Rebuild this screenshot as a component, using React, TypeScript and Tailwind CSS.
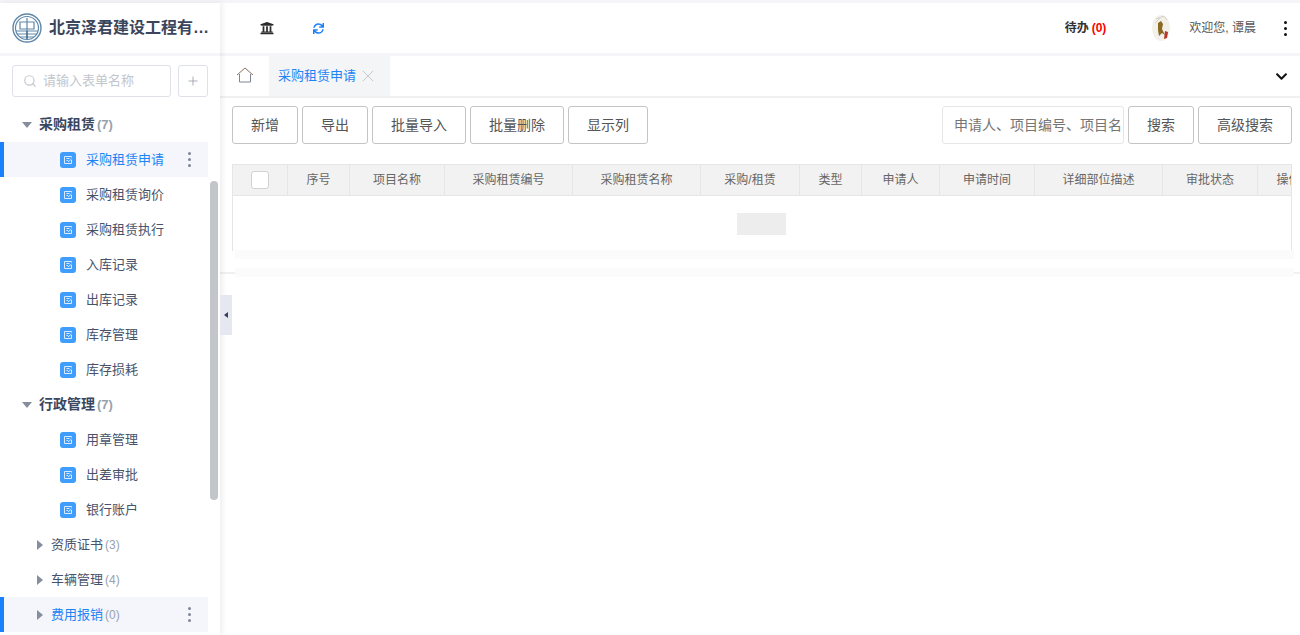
import { Plus, Search, X } from "lucide-react";
import { FaChevronDown, FaSync, FaUniversity } from "react-icons/fa";

const FONT = "font-['Liberation_Sans','Noto_Sans_CJK_SC',sans-serif]";

const columns = [
  { label: "序号", w: "w-[62px]" },
  { label: "项目名称", w: "w-[95px]" },
  { label: "采购租赁编号", w: "w-[128px]" },
  { label: "采购租赁名称", w: "w-[128px]" },
  { label: "采购/租赁", w: "w-[99px]" },
  { label: "类型", w: "w-[62px]" },
  { label: "申请人", w: "w-[78px]" },
  { label: "申请时间", w: "w-[95px]" },
  { label: "详细部位描述", w: "w-[128px]" },
  { label: "审批状态", w: "w-[95px]" },
  { label: "操作", w: "w-[62px]" },
];

function Dots({ className }: { className: string }) {
  return (
    <span className={`flex flex-col items-center gap-[3px] ${className}`}>
      <i className="w-[3px] h-[3px] rounded-full bg-current" />
      <i className="w-[3px] h-[3px] rounded-full bg-current" />
      <i className="w-[3px] h-[3px] rounded-full bg-current" />
    </span>
  );
}

function Logo() {
  return (
    <svg width="30" height="30" viewBox="0 0 30 30" fill="none" stroke="#5f87a8" className="shrink-0">
      <circle cx="15" cy="15" r="14" strokeWidth="1.4" />
      <circle cx="15" cy="15" r="11.5" strokeWidth="1.2" />
      <path d="M8 9h14v7H8zM15 5v13M4 18h22M5 21h20M8 24h14" strokeWidth="1.2" />
      <path d="M15 18v8" strokeWidth="1.6" stroke="#3f6a8e" />
    </svg>
  );
}

function FormIcon() {
  return (
    <span className="w-4 h-4 rounded-[3px] bg-[#3f9dfd] flex items-center justify-center shrink-0">
      <svg width="10" height="10" viewBox="0 0 10 10" fill="none" stroke="#d8ebff" strokeWidth="1">
        <path d="M8.5 5v3.5h-7v-7h7v1" />
        <path d="M3.5 3.5h3M3.5 5.5h1.5M5 7l3.5-3" />
      </svg>
    </span>
  );
}

function Caret({ open }: { open?: boolean }) {
  return open ? (
    <i className="w-0 h-0 border-x-[5px] border-x-transparent border-t-[6px] border-t-[#868e9e]" />
  ) : (
    <i className="w-0 h-0 border-y-[5px] border-y-transparent border-l-[6px] border-l-[#868e9e]" />
  );
}

function Group({ label, count }: { label: string; count: number }) {
  return (
    <div className="h-[35px] pl-[22px] flex items-center">
      <Caret open />
      <span className="ml-[7px] text-[14px] font-bold text-[#3a4660]">{label}</span>
      <span className="ml-[2px] text-[13px] font-bold text-[#99a1ae]">({count})</span>
    </div>
  );
}

function Item({ label, active }: { label: string; active?: boolean }) {
  return (
    <div
      className={`h-[35px] w-[208px] flex items-center ${
        active ? "bg-[#f4f6fb] border-l-4 border-[#1a7ffb] pl-[56px]" : "pl-[60px]"
      }`}
    >
      <FormIcon />
      <span className={`ml-[10px] text-[13px] ${active ? "text-[#1d84f5]" : "text-[#48536b]"}`}>{label}</span>
      {active && <Dots className="ml-auto mr-[17px] text-[#7d8595]" />}
    </div>
  );
}

function Folder({ label, count, active }: { label: string; count: number; active?: boolean }) {
  return (
    <div
      className={`h-[35px] w-[208px] flex items-center ${
        active ? "bg-[#f4f6fb] border-l-4 border-[#1a7ffb] pl-[33px]" : "pl-[37px]"
      }`}
    >
      <Caret />
      <span className={`ml-[8px] text-[13px] ${active ? "text-[#1d84f5]" : "text-[#48536b]"}`}>{label}</span>
      <span className="ml-[2px] text-[12px] text-[#99a1ae]">({count})</span>
      {active && <Dots className="ml-auto mr-[17px] text-[#7d8595]" />}
    </div>
  );
}

function Btn({ label, w }: { label: string; w: string }) {
  return (
    <button className={`h-[38px] ${w} shrink-0 rounded-[3px] border border-[#c4c4c4] bg-white text-[14px] text-[#555]`}>
      {label}
    </button>
  );
}

export default function App() {
  return (
    <div className={`${FONT} h-[635px] w-[1300px] overflow-hidden bg-white flex flex-col`}>
      <div className="h-[3px] bg-[#f5f5f9] shrink-0" />
      <div className="flex flex-1 min-h-0">
        {/* sidebar */}
        <aside className="relative z-10 w-[220px] shrink-0 bg-white shadow-[2px_0_6px_rgba(0,0,0,0.08)] flex flex-col">
          <div className="h-[50px] shrink-0 pl-[12px] flex items-center">
            <Logo />
            <span className="ml-[7px] text-[16px] font-bold text-[#3b465c] whitespace-nowrap">北京泽君建设工程有…</span>
          </div>
          <div className="h-[3px] shrink-0 bg-[#f5f5f9]" />
          <div className="pt-[9px] pl-[12px] pr-[12px] flex gap-[7px] shrink-0">
            <div className="h-[32px] w-[159px] rounded-[3px] border border-[#dfe1e8] flex items-center pl-[10px]">
              <Search size={14} className="text-[#c5c8ce]" />
              <span className="ml-[6px] text-[13px] text-[#c3c6cc]">请输入表单名称</span>
            </div>
            <div className="h-[32px] w-[30px] rounded-[3px] border border-[#dfe1e8] flex items-center justify-center">
              <Plus size={14} className="text-[#9ca1aa]" strokeWidth={1.5} />
            </div>
          </div>
          <div className="mt-[10px] min-h-0 flex-1 overflow-hidden">
            <Group label="采购租赁" count={7} />
            <Item label="采购租赁申请" active />
            <Item label="采购租赁询价" />
            <Item label="采购租赁执行" />
            <Item label="入库记录" />
            <Item label="出库记录" />
            <Item label="库存管理" />
            <Item label="库存损耗" />
            <Group label="行政管理" count={7} />
            <Item label="用章管理" />
            <Item label="出差审批" />
            <Item label="银行账户" />
            <Folder label="资质证书" count={3} />
            <Folder label="车辆管理" count={4} />
            <Folder label="费用报销" count={0} active />
          </div>
          <div className="absolute left-[210px] top-[178px] h-[319px] w-[8px] rounded-full bg-[#c2c5ca]" />
          {/* collapse handle */}
          <div className="absolute left-[220px] top-[292px] h-[40px] w-[12px] bg-[#e6e8f1] flex items-center justify-center">
            <i className="w-0 h-0 border-y-[3px] border-y-transparent border-r-[4px] border-r-[#33405a]" />
          </div>
        </aside>

        {/* main */}
        <main className="flex-1 min-w-0 flex flex-col">
          <header className="h-[50px] shrink-0 flex items-center">
            <FaUniversity size={14} className="ml-[40px] text-[#2b2b2b]" />
            <FaSync size={11} className="ml-[39px] text-[#1a7ffb]" />
            <span className="ml-auto text-[12px] font-bold text-[#333]">待办</span>
            <span className="ml-[3px] text-[12px] font-bold text-[#f00]">(0)</span>
            <svg width="20" height="28" viewBox="0 0 20 28" className="ml-[45px]">
              <ellipse cx="10" cy="14" rx="9" ry="13" fill="#f3f0ea" />
              <path d="M5 5l8-3 3 4M4 9l5-5" fill="none" stroke="#d5d0c8" />
              <path d="M7 9l3-2 2 3-1 5 3 6-3-2-3 3-1-6z" fill="#8a6a22" />
              <path d="M14 17l3 1-1 6-3 1z" fill="#b5352a" />
            </svg>
            <span className="ml-[18px] text-[12px] text-[#555]">欢迎您, 谭晨</span>
            <Dots className="ml-[28px] mr-[13px] text-[#111]" />
          </header>
          <div className="h-[3px] shrink-0 bg-[#f5f5f9]" />

          <div className="h-[42px] shrink-0 flex items-stretch border-b-2 border-[#f0f0f0]">
            <div className="w-[49px] pl-[1px] flex items-center justify-center pb-[2px]">
              <svg width="18" height="16" viewBox="0 0 18 16" fill="none" strokeWidth="1">
                <path d="M1 8l8-7 8 7" stroke="#8a6d5d" />
                <path d="M3.5 7v8h11V7" stroke="#7d8596" />
              </svg>
            </div>
            <div className="w-[121px] bg-[#f4f5f6] flex items-center pl-[9px]">
              <span className="text-[13px] text-[#1d84f5]">采购租赁申请</span>
              <X size={20} className="ml-[2px] text-[#c9c9c9]" strokeWidth={1.2} />
            </div>
            <FaChevronDown size={13} className="ml-auto mr-[12px] self-center text-[#111]" />
          </div>

          <div className="relative flex-1 min-h-0">
            <div className="pl-[12px] pr-[8px] pt-[8px] flex items-start">
              <div className="flex gap-[4px]">
                <Btn label="新增" w="w-[66px]" />
                <Btn label="导出" w="w-[66px]" />
                <Btn label="批量导入" w="w-[94px]" />
                <Btn label="批量删除" w="w-[94px]" />
                <Btn label="显示列" w="w-[80px]" />
              </div>
              <div className="ml-auto flex gap-[4px]">
                <div className="h-[38px] w-[182px] rounded-[3px] border border-[#e6e6e6] pl-[11px] pr-[1px] flex items-center overflow-hidden">
                  <span className="text-[14px] text-[#757575] whitespace-nowrap overflow-hidden">申请人、项目编号、项目名称</span>
                </div>
                <Btn label="搜索" w="w-[66px]" />
                <Btn label="高级搜索" w="w-[94px]" />
              </div>
            </div>

            <div className="ml-[12px] mr-[8px] mt-[20px] h-[87px] border-x border-[#e6e6e6] overflow-hidden relative">
              <div className="h-[32px] flex bg-[#f2f2f2] border-y border-[#e6e6e6]">
                <div className="w-[55px] shrink-0 border-r border-[#e6e6e6] flex items-center justify-center">
                  <span className="w-[18px] h-[18px] rounded-[3px] border border-[#d2d2d2] bg-white" />
                </div>
                {columns.map((c) => (
                  <div
                    key={c.label}
                    className={`${c.w} shrink-0 border-r border-[#e6e6e6] flex items-center justify-center text-[12px] text-[#666] whitespace-nowrap`}
                  >
                    {c.label}
                  </div>
                ))}
              </div>
              <div className="mt-[17px] ml-[504px] w-[49px] h-[22px] bg-[#ededed]" />
            </div>

            <div className="absolute left-[15px] right-[6px] top-[152px] h-[9px] bg-[#fbfbfb]" />
            <div className="absolute left-[15px] right-[6px] top-[170px] h-[9px] bg-[#fbfbfb]" />
            <div className="mt-[21px] h-[2px] bg-[#f0f0f0]" />
          </div>
        </main>
      </div>
    </div>
  );
}
